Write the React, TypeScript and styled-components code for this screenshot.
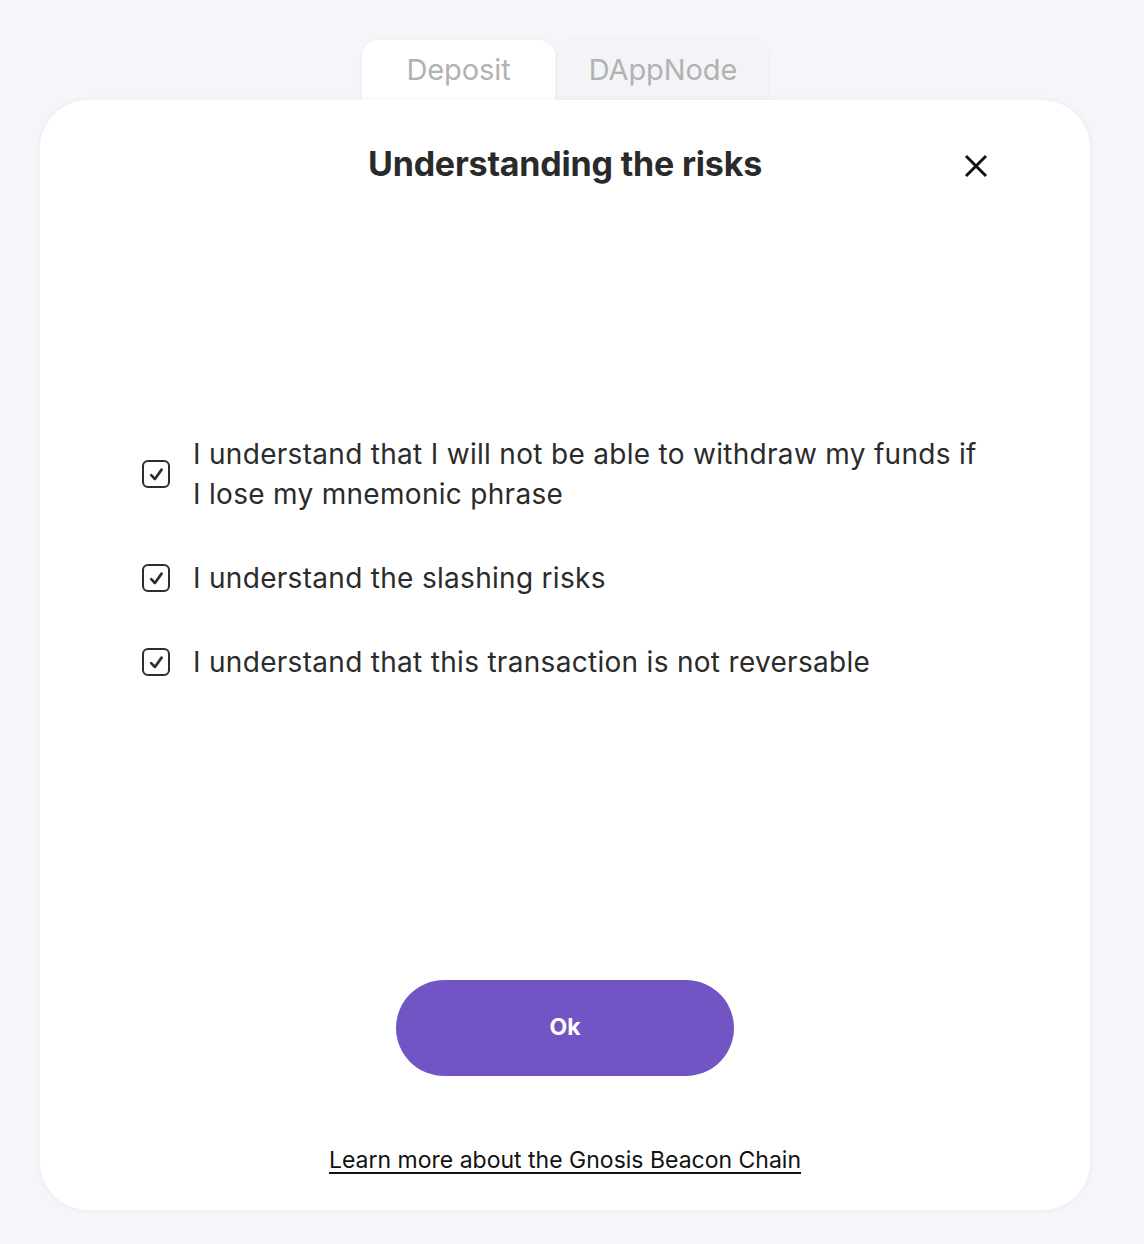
import React from "react";
import styled, { createGlobalStyle } from "styled-components";

const Global = createGlobalStyle`
  html, body { margin: 0; padding: 0; background: #f5f6fa; }
  body { font-family: Inter, "Noto Sans", sans-serif; color: #2b2b2b; }
`;

const Page = styled.div`
  width: 1130px;
  height: 1244px;
  display: flex;
  flex-direction: column;
  align-items: center;
  padding-top: 40px;
  box-sizing: border-box;
`;

const Tabs = styled.div`
  display: flex;
  gap: 3px;
`;

const Tab = styled.div<{ $active?: boolean }>`
  width: ${(p) => (p.$active ? 193 : 210)}px;
  height: 60px;
  box-sizing: border-box;
  display: flex;
  justify-content: center;
  padding-top: 12px;
  border-radius: 16px 16px 0 0;
  background: ${(p) => (p.$active ? "#ffffff" : "#f3f4f8")};
  box-shadow: 0 0 4px rgba(0, 0, 0, 0.05);
  font-size: 29px;
  color: #b2b2b2;
  letter-spacing: -0.1px;
`;

const Card = styled.div`
  width: 1050px;
  height: 1110px;
  background: #fff;
  border-radius: 48px;
  box-shadow: 0 0 6px rgba(40, 40, 80, 0.06);
  box-sizing: border-box;
  display: flex;
  flex-direction: column;
  align-items: center;
  position: relative;
  padding-top: 44px;
`;

const Header = styled.div`
  width: 100%;
  display: flex;
  justify-content: center;
  position: relative;
`;

const Title = styled.h1`
  margin: 0;
  font-size: 34px;
  font-weight: 700;
  color: #2a2a2a;
  letter-spacing: -0.2px;
  line-height: 40px;
`;

const Close = styled.button`
  position: absolute;
  right: 102px;
  top: 10px;
  width: 24px;
  height: 24px;
  padding: 0;
  border: none;
  background: none;
  cursor: pointer;
`;

const List = styled.div`
  margin-top: 250px;
  width: 100%;
  padding-left: 102px;
  box-sizing: border-box;
  display: flex;
  flex-direction: column;
  gap: 44px;
`;

const Item = styled.label`
  display: flex;
  align-items: center;
  gap: 23px;
  font-size: 28px;
  line-height: 40px;
  color: #2b2b2b;
  letter-spacing: 0.3px;
`;

const Text = styled.span`
  max-width: 790px;
`;

const Box = styled.span`
  flex: none;
  width: 24px;
  height: 24px;
  border: 2px solid #2d2d2d;
  border-radius: 6px;
  display: flex;
  align-items: center;
  justify-content: center;
`;

const Spacer = styled.div`
  flex: 1;
`;

const OkButton = styled.button`
  width: 338px;
  height: 96px;
  border: none;
  border-radius: 48px;
  background: #7255c5;
  color: #fff;
  font-family: Inter, sans-serif;
  font-size: 23px;
  font-weight: 700;
  padding-bottom: 4px;
  cursor: pointer;
`;

const Link = styled.a`
  margin-top: 70px;
  margin-bottom: 36px;
  font-size: 23px;
  color: #111;
  text-decoration: underline;
  text-underline-offset: 4px;
  letter-spacing: 0;
`;

const Check = () => (
  <Box>
    <svg width="17" height="17" viewBox="0 0 16 16" fill="none">
      <path d="M3 8.6 L6.5 12.2 L12.8 3.4" stroke="#2d2d2d" strokeWidth="2.5" strokeLinecap="round" strokeLinejoin="round" />
    </svg>
  </Box>
);

export default function App() {
  return (
    <>
      <Global />
      <Page>
        <Tabs>
          <Tab $active>Deposit</Tab>
          <Tab>DAppNode</Tab>
        </Tabs>
        <Card>
          <Header>
            <Title>Understanding the risks</Title>
            <Close aria-label="close">
              <svg width="24" height="24" viewBox="0 0 24 24">
                <path d="M2 2 L22 22 M22 2 L2 22" stroke="#111" strokeWidth="3" />
              </svg>
            </Close>
          </Header>
          <List>
            <Item>
              <Check />
              <Text>I understand that I will not be able to withdraw my funds if I lose my mnemonic phrase</Text>
            </Item>
            <Item>
              <Check />
              <Text>I understand the slashing risks</Text>
            </Item>
            <Item>
              <Check />
              <Text>I understand that this transaction is not reversable</Text>
            </Item>
          </List>
          <Spacer />
          <OkButton>Ok</OkButton>
          <Link href="#">Learn more about the Gnosis Beacon Chain</Link>
        </Card>
      </Page>
    </>
  );
}
